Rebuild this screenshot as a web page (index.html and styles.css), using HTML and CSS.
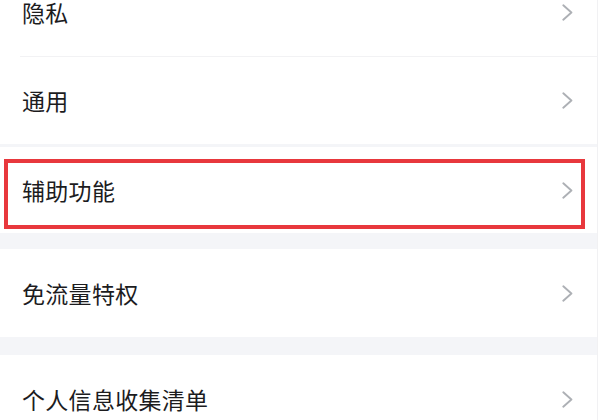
FILE: index.html
```html
<!DOCTYPE html>
<html lang="zh-CN">
<head>
<meta charset="utf-8">
<link rel="stylesheet" href="styles.css">
</head>
<body>
<div class="page">
  <div class="group first">
    <div class="row">
      <span class="label">隐私</span>
      <svg class="chev" width="11" height="17" viewBox="0 0 11 17"><polyline points="1.3,1.3 9.4,8.5 1.3,15.7" fill="none" stroke="#adb0b5" stroke-width="1.9" stroke-linecap="round" stroke-linejoin="round"/></svg>
    </div>
    <div class="row sep">
      <span class="label">通用</span>
      <svg class="chev" width="11" height="17" viewBox="0 0 11 17"><polyline points="1.3,1.3 9.4,8.5 1.3,15.7" fill="none" stroke="#adb0b5" stroke-width="1.9" stroke-linecap="round" stroke-linejoin="round"/></svg>
    </div>
  </div>
  <div class="band thin"></div>
  <div class="group">
    <div class="row r3">
      <span class="label">辅助功能</span>
      <svg class="chev" width="11" height="17" viewBox="0 0 11 17"><polyline points="1.3,1.3 9.4,8.5 1.3,15.7" fill="none" stroke="#adb0b5" stroke-width="1.9" stroke-linecap="round" stroke-linejoin="round"/></svg>
      <div class="mark"></div>
    </div>
  </div>
  <div class="band"></div>
  <div class="group">
    <div class="row">
      <span class="label">免流量特权</span>
      <svg class="chev" width="11" height="17" viewBox="0 0 11 17"><polyline points="1.3,1.3 9.4,8.5 1.3,15.7" fill="none" stroke="#adb0b5" stroke-width="1.9" stroke-linecap="round" stroke-linejoin="round"/></svg>
    </div>
  </div>
  <div class="band wide"></div>
  <div class="group">
    <div class="row">
      <span class="label">个人信息收集清单</span>
      <svg class="chev" width="11" height="17" viewBox="0 0 11 17"><polyline points="1.3,1.3 9.4,8.5 1.3,15.7" fill="none" stroke="#adb0b5" stroke-width="1.9" stroke-linecap="round" stroke-linejoin="round"/></svg>
    </div>
  </div>
</div>
</body>
</html>
```

FILE: styles.css
```css
html, body {
  margin: 0;
  padding: 0;
  background: #ffffff;
  overflow: hidden;
}

body {
  width: 600px;
  height: 420px;
  font-family: "Noto Sans CJK SC", "Noto Sans", sans-serif;
}

.page {
  width: 597px;
  border-right: 1px solid #f1f1f3;
  background: #ffffff;
}

.group.first {
  margin-top: -32px;
}

.row {
  position: relative;
  height: 88px;
  display: flex;
  align-items: center;
  justify-content: space-between;
  padding: 0 24px 0 22px;
  box-sizing: border-box;
}

.row.sep {
  border-top: 1px solid #f2f2f4;
  margin-left: 20px;
  padding-left: 2px;
}

.row.r3 {
  height: 86px;
}

.label {
  font-size: 23px;
  color: #1c1c1e;
  letter-spacing: 0.3px;
  line-height: 1;
}

.chev {
  display: block;
  flex: none;
}

.band {
  height: 16px;
  background: #f4f5f8;
}

.band.thin {
  height: 3px;
}

.band.wide {
  height: 18px;
}

.mark {
  position: absolute;
  left: 4px;
  top: 12px;
  width: 581px;
  height: 70px;
  box-sizing: border-box;
  border: 4px solid #e8383d;
  pointer-events: none;
}
```
